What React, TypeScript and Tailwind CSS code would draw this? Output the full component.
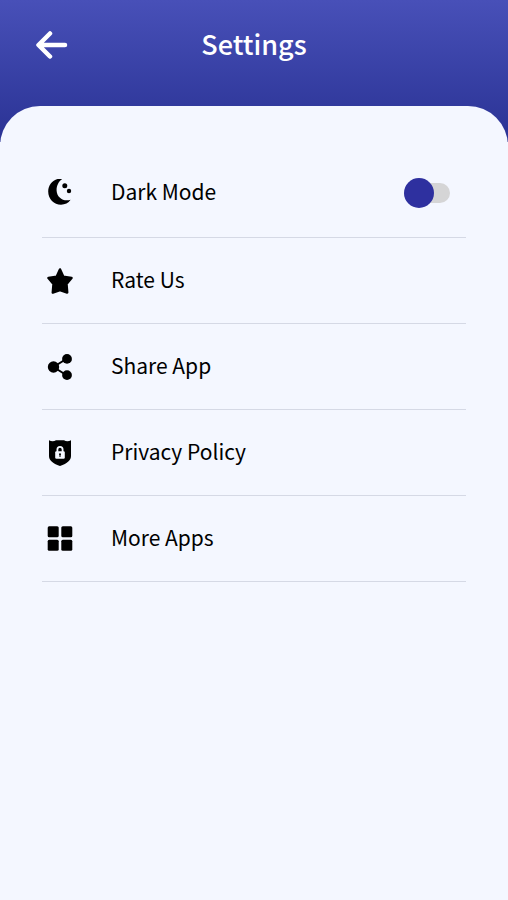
import { useState } from "react";
import type { ReactNode } from "react";

function MoonIcon() {
  return (
    <svg viewBox="0 1 26 28" className="h-7 w-[26px]" fill="currentColor" aria-hidden="true">
      <path d="M15.500 0.800C7.500-.4 1.200 5.800 1.200 13.500s5.800 13.200 12.800 13.200c4 0 7.400-1.600 9.600-4.900C16.500 24 9.800 19.500 9.600 12.500 9.500 7.500 11.800 3 15.500.8Z" />
      <circle cx="17.800" cy="7.800" r="2.500" />
      <circle cx="22" cy="13" r="2.200" />
    </svg>
  );
}

function StarIcon() {
  return (
    <svg viewBox="0 0 26 26" className="size-[26px]" fill="currentColor" stroke="currentColor" strokeWidth="2.500" strokeLinejoin="round" aria-hidden="true">
      <path d="M13 1.500 16.300 8.800 24.500 10 19.500 16l.7 8.500L13 22l-7.200 2.500.7-8.500L1.500 10 9.700 8.800Z" />
    </svg>
  );
}

function ShareIcon() {
  return (
    <svg viewBox="0 0 26 26" className="size-[26px]" fill="currentColor" aria-hidden="true">
      <path d="M20 4.500 6.500 13 20 21.500" fill="none" stroke="currentColor" strokeWidth="2" />
      <circle cx="6.500" cy="13" r="5.700" />
      <circle cx="20" cy="4.900" r="4.900" />
      <circle cx="20" cy="21.100" r="4.900" />
    </svg>
  );
}

function ShieldIcon() {
  return (
    <svg viewBox="0 0 26 26" className="size-[26px]" fill="currentColor" aria-hidden="true">
      <path d="M2 .3C4.500 1.600 7 1.500 9 .3h8c2 1.200 4.500 1.300 7 0V16c0 4-3.500 7.500-11 10C5.500 23.500 2 20 2 16Z" />
      <path d="M10.400 12V9.500a2.600 2.600 0 0 1 5.200 0V12" fill="none" stroke="#f4f7ff" strokeWidth="1.800" />
      <rect x="8.200" y="11.200" width="9.600" height="7.600" rx="1.200" fill="#f4f7ff" />
      <circle cx="13" cy="14.300" r="1" />
      <path d="M12.500 14.500h1v2.500h-1Z" />
    </svg>
  );
}

function GridIcon() {
  return (
    <svg viewBox="0 0 26 26" className="size-[26px]" fill="currentColor" aria-hidden="true">
      <rect x="0.700" y="0.200" width="11" height="11" rx="1.500" />
      <rect x="14.300" y="0.200" width="11" height="11" rx="1.500" />
      <rect x="0.700" y="13.800" width="11" height="11" rx="1.500" />
      <rect x="14.300" y="13.800" width="11" height="11" rx="1.500" />
    </svg>
  );
}

const links: { label: string; icon: ReactNode }[] = [
  { label: "Rate Us", icon: <StarIcon /> },
  { label: "Share App", icon: <ShareIcon /> },
  { label: "Privacy Policy", icon: <ShieldIcon /> },
  { label: "More Apps", icon: <GridIcon /> },
];

export default function App() {
  const [dark, setDark] = useState(false);

  return (
    <div className="min-h-screen bg-[#f4f7ff] font-['Noto_Sans_CJK_SC',sans-serif] text-black">
      <header className="grid grid-cols-[1fr_auto_1fr] items-center bg-linear-to-b from-[#4850b8] to-[#2a3294] px-8 pt-6 pb-[76px] text-white">
        <button type="button" aria-label="Back" className="justify-self-start p-1">
          <svg viewBox="0 0 32 28" className="h-7 w-8" fill="none" stroke="currentColor" strokeWidth="4.500" strokeLinecap="round" strokeLinejoin="round" aria-hidden="true">
            <path d="M14 2.500 2.500 14 14 25.500M3 14h26" />
          </svg>
        </button>
        <h1 className="pb-0.5 text-[27px] leading-10 font-medium">Settings</h1>
      </header>

      <main className="-mt-9 rounded-t-[40px] bg-[#f4f7ff] px-[42px] pt-[42px]">
        <ul className="text-[21px] leading-8">
          <li className="flex h-[90px] items-center border-b border-[#d5d9e5] pr-4 pl-[5px]">
            <MoonIcon />
            <label htmlFor="dark-mode" className="ml-[38px] flex-1 pb-1">
              Dark Mode
            </label>
            <input
              id="dark-mode"
              type="checkbox"
              role="switch"
              checked={dark}
              onChange={(e) => setDark(e.target.checked)}
              className="
                flex h-5 w-[46px] cursor-pointer appearance-none items-center rounded-full bg-[#d5d5d6]
                before:size-[30px] before:shrink-0 before:rounded-full before:bg-[#2e309f] before:transition
                checked:before:translate-x-4
              "
            />
          </li>
          {links.map((item) => (
            <li key={item.label} className="border-b border-[#d5d9e5]">
              <button type="button" className="flex h-[85px] w-full items-center pl-[5px] text-left">
                {item.icon}
                <span className="ml-[38px] pb-1">{item.label}</span>
              </button>
            </li>
          ))}
        </ul>
      </main>
    </div>
  );
}
